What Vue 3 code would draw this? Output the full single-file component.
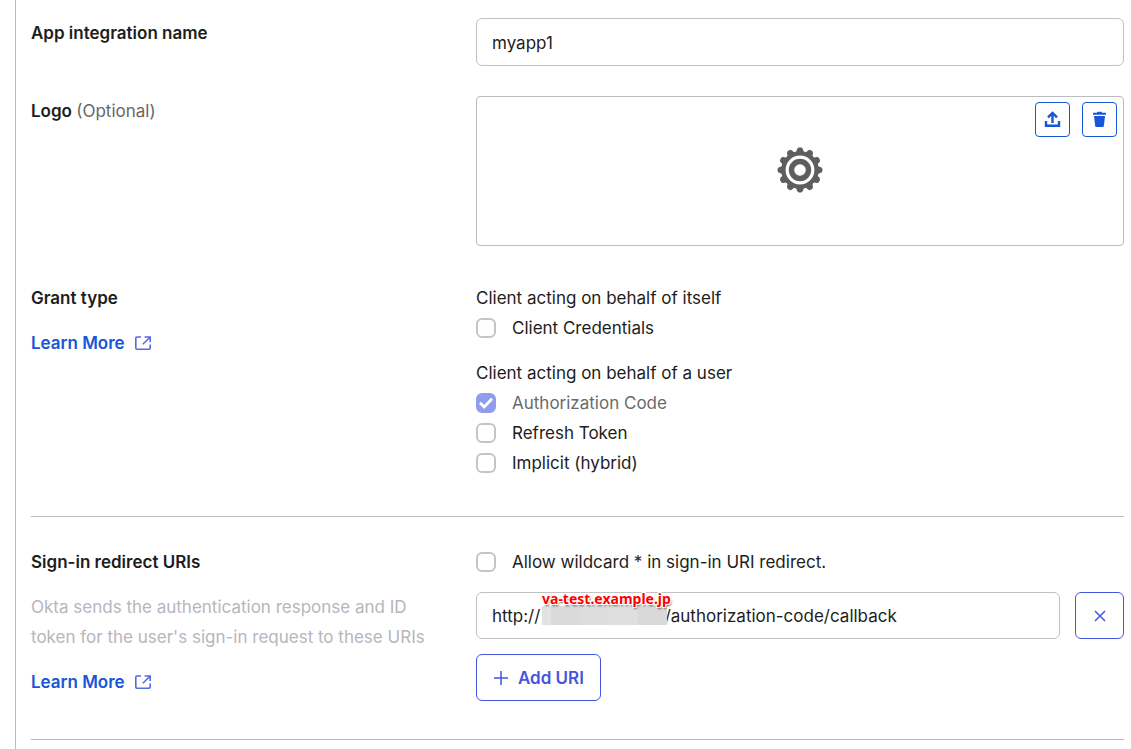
<script setup>
import { ref } from 'vue'

const appName = ref('myapp1')
const redirectUri = ref('http://' + '\u00a0'.repeat(26) + '/authorization-code/callback')
const wildcard = ref(false)

const grantGroups = ref([
  {
    title: 'Client acting on behalf of itself',
    options: [{ id: 'client-credentials', label: 'Client Credentials', checked: false, disabled: false }],
  },
  {
    title: 'Client acting on behalf of a user',
    options: [
      { id: 'authorization-code', label: 'Authorization Code', checked: true, disabled: true },
      { id: 'refresh-token', label: 'Refresh Token', checked: false, disabled: false },
      { id: 'implicit', label: 'Implicit (hybrid)', checked: false, disabled: false },
    ],
  },
])

const teeth = Array.from({ length: 12 }, (_, i) => i * 30)
</script>

<template>
  <form class="panel" @submit.prevent>
    <section class="row name-row">
      <label class="title" for="app-name">App integration name</label>
      <input id="app-name" v-model="appName" class="field" type="text" />
    </section>

    <section class="row logo-row">
      <div class="title">Logo <span class="optional">(Optional)</span></div>
      <div class="logo-box">
        <svg class="gear" viewBox="-24 -23 48 48" aria-hidden="true">
          <path
            v-for="angle in teeth"
            :key="angle"
            d="M-4.6 -16 L-2.8 -21 Q-2.2 -22.4 -1 -22.4 H1 Q2.2 -22.4 2.8 -21 L4.6 -16 Z"
            :transform="`rotate(${angle})`"
            fill="#5e5e5e"
          />
          <circle r="16.6" fill="none" stroke="#5e5e5e" stroke-width="4.4" />
          <circle r="8.5" fill="none" stroke="#5e5e5e" stroke-width="5.4" />
        </svg>
        <div class="logo-actions">
          <button class="icon-button" type="button" aria-label="Upload logo">
            <svg width="17" height="17" viewBox="0 0 17 17" fill="none" stroke="#1756d6" stroke-width="2.4">
              <path d="M8.5 12V2.5M4 6.4L8.5 1.9L13 6.4" />
              <path d="M2 10V14.8H15V10" />
            </svg>
          </button>
          <button class="icon-button" type="button" aria-label="Delete logo">
            <svg width="17" height="17" viewBox="0 0 17 17" fill="#1756d6">
              <path d="M2 1.8H5.8L6.6 .8H10.4L11.2 1.8H15V3.8H2Z" />
              <path d="M3 5H14L12.8 15.2Q12.7 16 11.9 16H5.1Q4.3 16 4.2 15.2Z" />
            </svg>
          </button>
        </div>
      </div>
    </section>

    <section class="row grant-row">
      <div class="aside">
        <div class="title">Grant type</div>
        <a class="learn" href="#grant-type">
          Learn More
          <svg width="16" height="16" viewBox="0 0 16 16" fill="none" stroke="#5a68e2" stroke-width="1.6">
            <path d="M6 2H2Q.8 2 .8 3.2V13Q.8 14.2 2 14.2H14Q15.2 14.2 15.2 13V9.6" />
            <path d="M9.6 2H15.2V7M15 2.2L7.8 9.2" />
          </svg>
        </a>
      </div>
      <div class="groups">
        <div v-for="group in grantGroups" :key="group.title" role="group" :aria-label="group.title">
          <div class="group-title">{{ group.title }}</div>
          <label v-for="option in group.options" :key="option.id" class="check" :class="{ muted: option.disabled }">
            <input v-model="option.checked" type="checkbox" :disabled="option.disabled" />
            <svg v-if="option.checked" class="tick" viewBox="0 0 20 20" fill="none" stroke="#fff" stroke-width="2.8">
              <path d="M4 9.8L8.2 14L16 5.8" />
            </svg>
            <span>{{ option.label }}</span>
          </label>
        </div>
      </div>
    </section>

    <section class="row redirect-row">
      <div class="aside">
        <div class="title">Sign-in redirect URIs</div>
        <p class="hint">Okta sends the authentication response and ID token for the user's sign-in request to these URIs</p>
        <a class="learn" href="#redirect-uris">
          Learn More
          <svg width="16" height="16" viewBox="0 0 16 16" fill="none" stroke="#5a68e2" stroke-width="1.6">
            <path d="M6 2H2Q.8 2 .8 3.2V13Q.8 14.2 2 14.2H14Q15.2 14.2 15.2 13V9.6" />
            <path d="M9.6 2H15.2V7M15 2.2L7.8 9.2" />
          </svg>
        </a>
      </div>
      <div class="uris">
        <label class="check">
          <input v-model="wildcard" type="checkbox" />
          <span>Allow wildcard * in sign-in URI redirect.</span>
        </label>
        <div class="uri-line">
          <div class="uri-field">
            <input v-model="redirectUri" class="field" type="text" aria-label="Sign-in redirect URI" />
            <span class="mask"></span>
            <span class="note">va-test.example.jp</span>
          </div>
          <button class="outline remove" type="button" aria-label="Remove URI">
            <svg width="12" height="12" viewBox="0 0 12 12" stroke="#4456de" stroke-width="1.5">
              <path d="M1 1L11 11M11 1L1 11" />
            </svg>
          </button>
        </div>
        <button class="outline add" type="button">
          <svg width="14" height="14" viewBox="0 0 14 14" stroke="#4456de" stroke-width="1.5">
            <path d="M7 0V14M0 7H14" />
          </svg>
          Add URI
        </button>
      </div>
    </section>
  </form>
</template>

<style>
body {
  background: #fff;
}
</style>

<style scoped>
.panel {
  box-sizing: border-box;
  min-height: 100vh;
  margin-left: 15px;
  padding: 18px 7px 0 15px;
  border-left: 1px solid #bcbcbc;
  color: #1d1d21;
  font: 17px/30px Inter, "Liberation Sans", sans-serif;
}

.panel *,
.panel input,
.panel button {
  box-sizing: border-box;
}

.row {
  display: grid;
  grid-template-columns: 445px minmax(0, 1fr);
  align-items: start;
}

.name-row {
  margin-bottom: 30px;
}

.logo-row {
  margin-bottom: 37px;
}

.grant-row {
  padding-bottom: 38px;
  border-bottom: 1px solid #bcbcbc;
}

.redirect-row {
  padding: 30px 0 38px;
  border-bottom: 1px solid #b7b7bd;
}

.title {
  font-weight: 600;
}

.optional {
  color: #666;
  font-weight: 400;
}

.field {
  display: block;
  width: 100%;
  height: 48px;
  margin: 0;
  padding: 1px 15px 0;
  border: 1px solid #c1c1c1;
  border-radius: 6px;
  background: #fff;
  color: inherit;
  font: inherit;
}

.logo-box {
  position: relative;
  display: flex;
  align-items: center;
  justify-content: center;
  height: 150px;
  border: 1px solid #bcbcbc;
  border-radius: 4px;
}

.gear {
  width: 48px;
  height: 48px;
}

.logo-actions {
  position: absolute;
  top: 5px;
  right: 6px;
  display: flex;
  gap: 12px;
}

.icon-button {
  display: grid;
  place-items: center;
  width: 35px;
  height: 35px;
  padding: 0;
  border: 1px solid #1756d6;
  border-radius: 4px;
  background: #fff;
}

.aside {
  display: grid;
  gap: 15px;
  padding-right: 32px;
  justify-items: start;
}

.learn {
  display: flex;
  align-items: center;
  gap: 10px;
  color: #1756d6;
  font-weight: 600;
  text-decoration: none;
}

.hint {
  margin: 0;
  color: #b6b6bd;
}

.groups {
  display: grid;
  gap: 15px;
}

.check {
  position: relative;
  display: flex;
  align-items: center;
  gap: 16px;
}

.check input {
  flex: none;
  width: 20px;
  height: 20px;
  margin: 0;
  border: 2px solid #c4c4c4;
  border-radius: 6px;
  background: #fff;
  appearance: none;
}

.check input:checked {
  border-color: #929cee;
  background: #929cee;
}

.tick {
  position: absolute;
  left: 0;
  width: 20px;
  height: 20px;
  pointer-events: none;
}

.muted {
  color: #6a6a6a;
}

.uris {
  display: grid;
  gap: 15px;
  justify-items: start;
}

.uri-line {
  display: flex;
  gap: 15px;
  width: 100%;
}

.uri-field {
  position: relative;
  flex: 1;
}

.uri-line .field {
  height: 47px;
  padding-top: 0;
}

.mask {
  position: absolute;
  top: 14px;
  left: 66px;
  width: 125px;
  height: 19px;
  background: linear-gradient(90deg, #e2e2e2 9px, #dadada 9px 38px, #dddddd 38px 67px, #dfdfdf 67px 96px, #d9d9d9 96px);
}

.note {
  position: absolute;
  top: -3px;
  left: 66px;
  color: #ff0000;
  font: 700 14px/20px "Noto Sans", sans-serif;
  white-space: nowrap;
  text-shadow: 0 0 1px #fff, 1px 1px 0 #fff, -1px -1px 0 #fff, 1px -1px 0 #fff, -1px 1px 0 #fff, 1px 2px 2px #555;
}

.outline {
  display: flex;
  align-items: center;
  justify-content: center;
  height: 47px;
  padding: 0;
  border: 1px solid #4456de;
  border-radius: 6px;
  background: #fff;
  color: #4456de;
  font: inherit;
  font-weight: 600;
}

.remove {
  width: 49px;
}

.add {
  gap: 10px;
  padding: 0 16px 0 17px;
}
</style>
